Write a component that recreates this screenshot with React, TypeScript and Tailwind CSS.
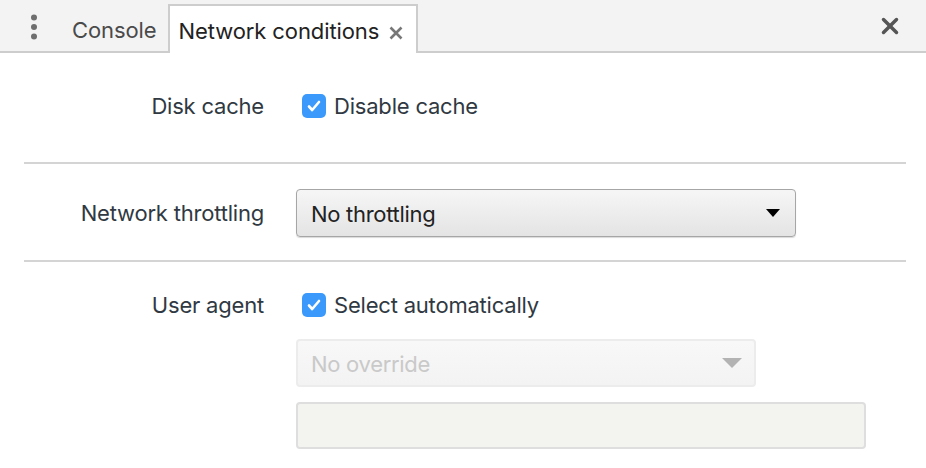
import { X } from "lucide-react";

const font = { fontFamily: "Inter, 'Noto Sans', sans-serif" };

export default function App() {
  return (
    <div
      className="h-[468px] w-[926px] overflow-hidden bg-white text-[#303942]"
      style={font}
    >
      {/* Tab bar */}
      <div className="flex h-[53px] items-end border-b-2 border-[#cdcdcd] bg-[#f3f3f3]">
        <div className="flex h-full w-[66px] items-center justify-center pl-[1px] pt-[2px]">
          <svg width="8" height="26" viewBox="0 0 8 26" className="fill-[#6e6e6e]">
            <circle cx="4" cy="3.5" r="3" />
            <circle cx="4" cy="13" r="3" />
            <circle cx="4" cy="22.5" r="3" />
          </svg>
        </div>
        <div className="flex h-[47px] items-center pl-[6px] pr-[11px] pt-[5px] text-[22px] tracking-[-0.1px] text-[#4a4a4a]">
          Console
        </div>
        <div className="-mb-[2px] flex h-[49px] w-[250px] items-center border-2 border-b-0 border-[#cdcdcd] bg-white pl-[9px] pt-[4px] text-[22px] tracking-[-0.1px] text-[#222]">
          Network conditions
          <svg width="14" height="14" viewBox="0 0 14 14" className="ml-[10px] mt-[2px] stroke-[#777]" strokeWidth="2.6">
            <path d="M1.5 1.5l11 11M12.5 1.5l-11 11" />
          </svg>
        </div>
        <div className="flex-1" />
        <div className="flex h-full w-[58px] items-center justify-center pr-[14px]">
          <X size={26} strokeWidth={3.2} className="text-[#555]" />
        </div>
      </div>

      {/* Disk cache */}
      <div className="pt-[40px] pb-[43px]">
        <Row label="Disk cache">
          <Checkbox label="Disable cache" />
        </Row>
      </div>
      <Divider />

      {/* Network throttling */}
      <div className="pt-[25px] pb-[23px]">
        <Row label="Network throttling">
          <Select value="No throttling" className="w-[500px]" />
        </Row>
      </div>
      <Divider />

      {/* User agent */}
      <div className="pt-[30px]">
        <Row label="User agent">
          <Checkbox label="Select automatically" />
        </Row>
        <div className="ml-[296px] mt-[21px] flex flex-col gap-[15px]">
          <Select value="No override" disabled className="w-[460px]" />
          <div className="h-[47px] w-[570px] rounded-[4px] border-2 border-[#dedede] bg-[#f3f3f0]" />
        </div>
      </div>
    </div>
  );
}

interface RowProps {
  label: string;
  children: React.ReactNode;
}

const Row = ({ label, children }: RowProps) => (
  <div className="flex min-h-[26px] items-center leading-[26px]">
    <div className="w-[264px] shrink-0 text-right text-[22px] tracking-[-0.2px]">
      {label}
    </div>
    <div className="ml-[32px] flex items-center">{children}</div>
  </div>
);

const Checkbox = ({ label }: { label: string }) => (
  <label className="flex h-[26px] items-center pl-[6px]">
    <span className="flex h-[24px] w-[24px] items-center justify-center rounded-[5px] bg-[#3b99fc]">
      <svg width="14" height="12" viewBox="0 0 14 12" fill="none" stroke="white" strokeWidth="2.6" strokeLinecap="round" strokeLinejoin="round">
        <path d="M2 6.5l3.2 3.5L12 2" />
      </svg>
    </span>
    <span className="ml-[8px] text-[22px] tracking-[-0.2px]">{label}</span>
  </label>
);

interface SelectProps {
  value: string;
  disabled?: boolean;
  className?: string;
}

const Select = ({ value, disabled = false, className = "" }: SelectProps) => (
  <div
    className={
      disabled
        ? `flex h-[48px] items-center justify-between rounded-[4px] border-2 border-[#ececec] bg-gradient-to-b from-[#f8f8f8] to-[#f3f3f3] pl-[13px] pr-[12px] text-[22px] tracking-[-0.3px] text-[#c9c9c9] ${className}`
        : `flex h-[48px] items-center justify-between rounded-[4px] border border-[#a6a6a6] bg-gradient-to-b from-[#f6f6f6] to-[#e4e4e4] pl-[14px] pr-[15px] text-[22px] tracking-[-0.3px] text-[#222] shadow-[0_1px_1px_rgba(0,0,0,0.15)] ${className}`
    }
  >
    <span className="mt-[2px]">{value}</span>
    {disabled ? (
      <svg width="20" height="10" viewBox="0 0 20 10" className="fill-[#b3b3b3]">
        <path d="M0 0h20L10 10z" />
      </svg>
    ) : (
      <svg width="14" height="8" viewBox="0 0 14 8" className="fill-black">
        <path d="M0 0h14L7 8z" />
      </svg>
    )}
  </div>
);

const Divider = () => (
  <div className="ml-[24px] mr-[20px] h-[2px] bg-[#d4d4d4]" />
);
